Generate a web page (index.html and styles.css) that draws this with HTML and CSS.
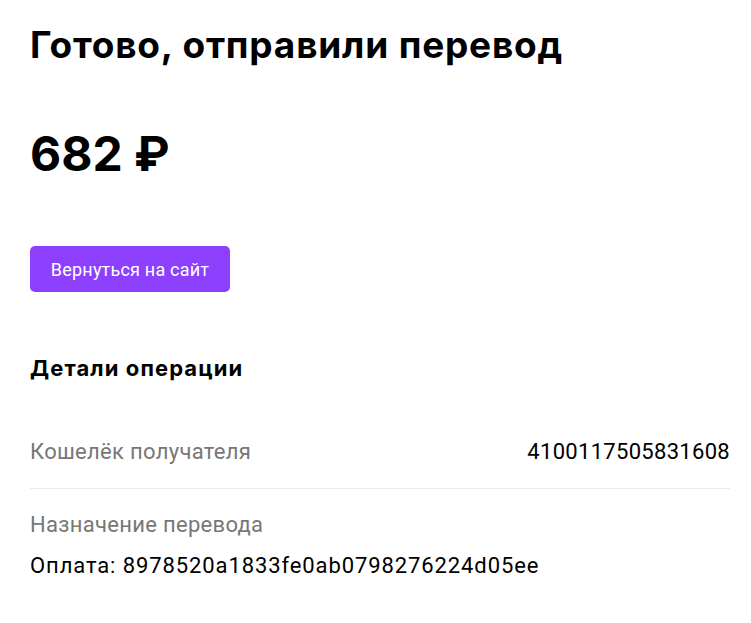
FILE: index.html
```html
<!DOCTYPE html>
<html lang="ru">
<head>
  <meta charset="UTF-8"/>
  <meta name="viewport" content="width=device-width,initial-scale=1"/>
  <title>Перевод отправлен</title>
  <link rel="stylesheet" href="styles.css">
</head>
<body>
  <!-- Result header -->
  <main class="page">
    <h1 class="title">Готово, отправили перевод</h1>
    <div class="amount">682 ₽</div>
    <button class="back-btn">Вернуться на сайт</button>

    <!-- Operation details -->
    <section class="details">
      <h2 class="details-title">Детали операции</h2>
      <div class="row">
        <span class="label">Кошелёк получателя</span>
        <span class="value">4100117505831608</span>
      </div>
      <div class="row row-stack">
        <span class="label">Назначение перевода</span>
        <span class="value">Оплата: 8978520a1833fe0ab0798276224d05ee</span>
      </div>
    </section>
  </main>
</body>
</html>
```

FILE: styles.css
```css
/* BASIC */
* { box-sizing: border-box; margin: 0; padding: 0; }
body { background: #fff; color: #000; font-family: "Inter", "Roboto", sans-serif; }
.page { padding: 20px 21px 0 30px; }

/* HEADER */
.title { font-size: 37px; font-weight: 700; line-height: 50px; letter-spacing: 0.8px; }
.amount { margin-top: 54px; font-size: 48px; font-weight: 700; line-height: 60px; }
.back-btn { margin-top: 62px; width: 200px; height: 46px; border: none; border-radius: 5px; background: #8c40fe; color: #fff; font: 18px "Roboto", sans-serif; letter-spacing: 0.2px; cursor: pointer; }

/* DETAILS */
.details { margin-top: 61px; }
.details-title { font-size: 22px; font-weight: 700; line-height: 30px; letter-spacing: 1.1px; }
.row { display: flex; justify-content: space-between; align-items: baseline; padding: 55px 0 22px; border-bottom: 1px solid #ebebeb; font-family: "Roboto", sans-serif; font-size: 22px; line-height: 28px; letter-spacing: 0.3px; }
.row-stack { flex-direction: column; gap: 13px; border-bottom: none; padding-top: 22px; }
.row-stack .value { letter-spacing: 0.9px; }
.label { color: #777; }
.value { color: #000; }
```
